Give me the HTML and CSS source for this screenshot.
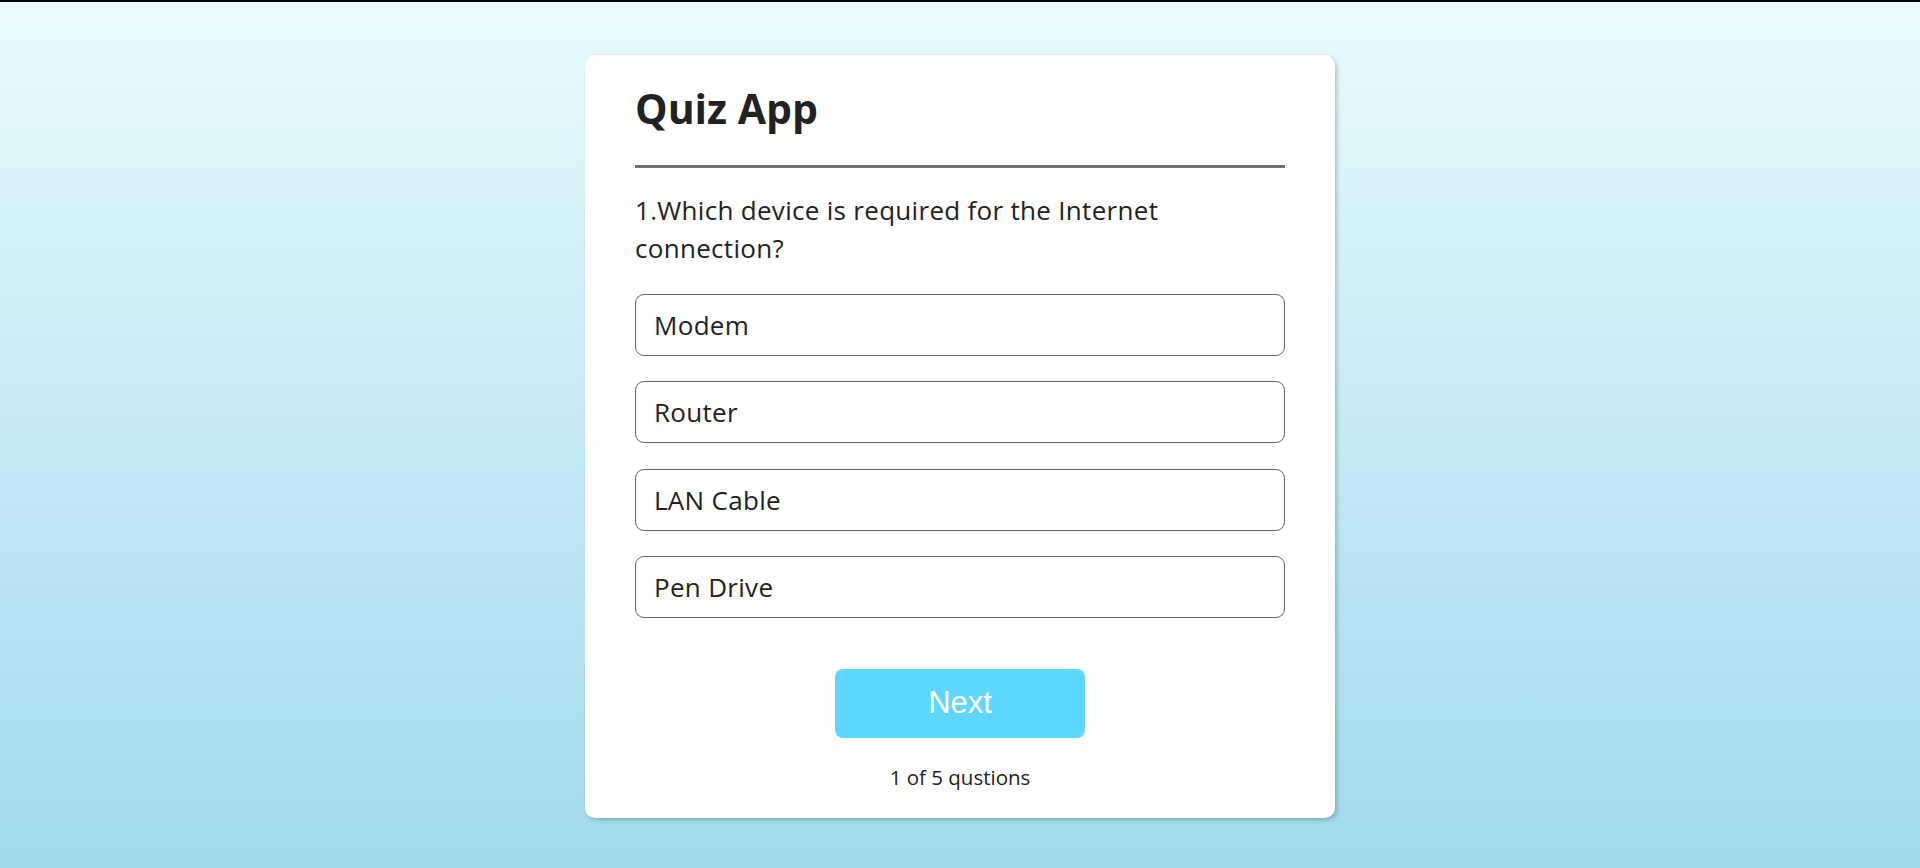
FILE: index.html
```html
<!DOCTYPE html>
<html lang="en">
<head>
<meta charset="utf-8">
<title>Quiz App</title>
<link rel="stylesheet" href="styles.css">
</head>
<body>
<div class="app">
  <h1 class="title">Quiz App</h1>
  <div class="quiz">
    <h2 class="question">1.Which device is required for the Internet connection?</h2>
    <div class="answers">
      <button class="answer">Modem</button>
      <button class="answer">Router</button>
      <button class="answer">LAN Cable</button>
      <button class="answer">Pen Drive</button>
    </div>
    <button class="next">Next</button>
    <p class="progress">1 of 5 qustions</p>
  </div>
</div>
</body>
</html>
```
FILE: styles.css
```css
* {
  box-sizing: border-box;
}
html, body {
  margin: 0;
  padding: 0;
}
body {
  min-height: 100vh;
  border-top: 2px solid #000;
  background: linear-gradient(to bottom, #e8fbff 0%, #a1d9eb 100%);
  font-family: "Open Sans", "Noto Sans", sans-serif;
  color: #222;
  padding-top: 53px;
}
.app {
  width: 750px;
  margin: 0 auto;
  background: #fff;
  border-radius: 10px;
  padding: 28px 50px 26px;
  box-shadow: 2px 2px 4px rgba(0, 0, 0, 0.22);
}
.title {
  font-size: 41px;
  font-weight: 700;
  line-height: 50px;
  margin: 0;
  padding-bottom: 32px;
  border-bottom: 3px solid #717171;
  color: #222;
}
.question {
  font-size: 26px;
  font-weight: 500;
  line-height: 38px;
  letter-spacing: 0.3px;
  margin: 23px 0 27px;
  color: #222;
}
.answers {
  display: flex;
  flex-direction: column;
  gap: 25.33px;
}
.answer {
  display: block;
  width: 100%;
  height: 62px;
  text-align: left;
  padding: 0 18px;
  background: #fff;
  border: 1px solid #666;
  border-radius: 9px;
  font-family: "Open Sans", "Noto Sans", sans-serif;
  font-size: 26px;
  letter-spacing: 0.3px;
  color: #222;
}
.next {
  display: block;
  width: 250px;
  height: 69px;
  margin: 51px auto 0;
  background: #5fd8ff;
  border: none;
  border-radius: 8px;
  color: #fff;
  font-family: "Liberation Sans", Arial, sans-serif;
  font-size: 31px;
}
.progress {
  text-align: center;
  font-size: 20.5px;
  margin: 24px 0 0;
  line-height: 30px;
  color: #222;
}
```
